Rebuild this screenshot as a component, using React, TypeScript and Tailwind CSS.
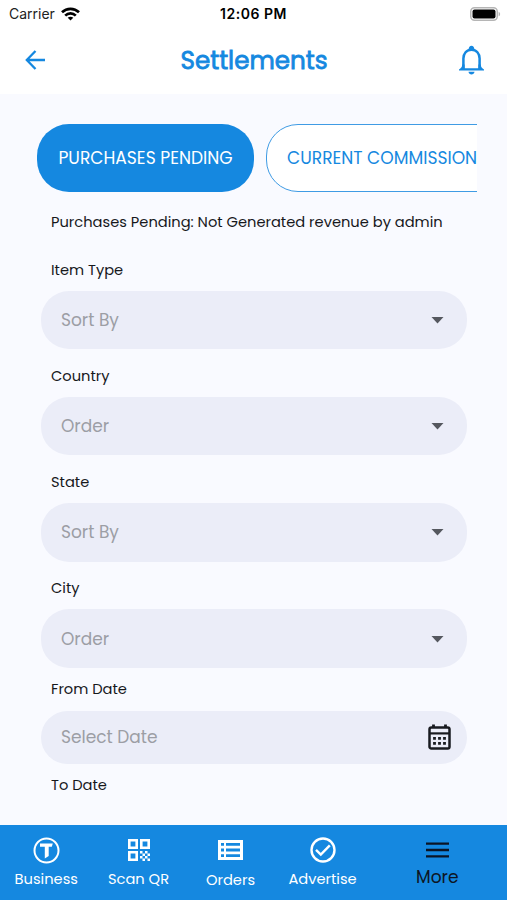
import type { ReactNode } from "react";

const selects = [
  { label: "Item Type", value: "Sort By" },
  { label: "Country", value: "Order" },
  { label: "State", value: "Sort By" },
  { label: "City", value: "Order" },
];

function StatusBar() {
  return (
    <div className="h-7 grid grid-cols-3 items-center pl-[9px] pr-[6px] text-black font-['Inter',sans-serif]">
      <div className="flex items-center gap-[6px]">
        <span className="text-[14px] leading-5 text-[#222]">Carrier</span>
        <svg width="19" height="14" viewBox="0 0 19 14" fill="none" stroke="currentColor" strokeWidth="2.7">
          <path d="M1 5.3C5.8.7 13.2.7 18 5.3" />
          <path d="M4.2 8.6c3-2.9 7.6-2.9 10.6 0" />
          <path d="M9.5 13.6 6.7 10.8c1.6-1.5 4-1.5 5.6 0z" fill="currentColor" stroke="none" />
        </svg>
      </div>
      <span className="-ml-[3px] text-center whitespace-nowrap text-[14px] leading-5 font-semibold tracking-[0.5px]">
        12:06 PM
      </span>
      <div className="flex justify-end">
        <svg width="31" height="14" viewBox="0 0 31 14">
          <rect x="0.75" y="0.75" width="26.5" height="12.5" rx="3.8" fill="#fff" stroke="#b5b5b5" strokeWidth="1.5" />
          <rect x="2.5" y="2.5" width="23" height="9" rx="2" fill="#000" />
          <path d="M28.6 4.7c2 .8 2 3.8 0 4.6z" fill="#b5b5b5" />
        </svg>
      </div>
    </div>
  );
}

function Header() {
  return (
    <div className="h-[66px] flex items-center justify-between pl-[25px] pr-[22px] pb-[3px] text-[#1588e0]">
      <svg width="21" height="20" viewBox="0 0 21 20" fill="none" stroke="currentColor" strokeWidth="2.3">
        <path d="M20 10H2M10.5 1 1.8 10l8.7 9" />
      </svg>
      <h1 className="ml-[3px] mt-[2px] text-[24.6px] leading-8 font-normal [-webkit-text-stroke:0.8px_#1588e0]">
        Settlements
      </h1>
      <svg width="26" height="30" viewBox="0 0 26 30" fill="none" stroke="currentColor" strokeWidth="2.5">
        <path d="M4.4 24.5V13.5C4.4 8.5 7.5 4.7 12.5 4.7s8.1 3.8 8.1 8.8v11" />
        <path d="M3.2 19.5c0 2.6-1.3 3.9-3.2 4.9v1.2h25v-1.2c-1.9-1-3.2-2.3-3.2-4.9h-2.4v3.8H5.600v-3.800z" fill="currentColor" stroke="none" />
        <path d="M9.5 5C9.5-.8 15.500-.8 15.500 5zM9.500 26.800h6c-.3 3.700-5.700 3.700-6 0z" fill="currentColor" stroke="none" />
      </svg>
    </div>
  );
}

function CalendarIcon() {
  return (
    <svg width="24" height="26" viewBox="0 0 24 26" fill="none" stroke="#191b20">
      <rect x="1.5" y="3.5" width="20" height="21" rx="1.8" strokeWidth="2.5" />
      <path d="M1 9.4h21" strokeWidth="2.2" />
      <path d="M5.5 .5V4M17.5 .5V4" strokeWidth="2.8" />
      <path d="M5.1 14.4h12.8M5.1 19.3h12.8" strokeWidth="2.8" strokeDasharray="2.8 2.2" />
    </svg>
  );
}

function NavItem({ label, children, className }: { label: string; children: ReactNode; className: string }) {
  return (
    <div className="flex flex-col items-center pt-[11px]">
      <div className="h-7 flex items-center">{children}</div>
      <span className={className}>{label}</span>
    </div>
  );
}

function BottomNav() {
  return (
    <nav className="h-[75px] shrink-0 grid grid-cols-[92.5px_92px_92px_92px_1fr] bg-[#1588e0] pr-[1px] text-white">
      <NavItem label="Business" className="mt-[5px] text-[14.67px] leading-5">
        <svg width="27" height="27" viewBox="0 0 27 27" fill="none" stroke="currentColor">
          <circle cx="13.5" cy="13.5" r="12" strokeWidth="2" />
          <path d="M7 6.400h12.800l-1 3.300h-3.100V19l-3.900 2.400V9.700H7z" fill="currentColor" stroke="none" />
        </svg>
      </NavItem>
      <NavItem label="Scan QR" className="mt-[5px] text-[14.67px] leading-5">
        <svg width="24" height="24" viewBox="0 0 24 24" fill="currentColor">
          <path fillRule="evenodd" d="M1 1h10v10H1zM3.6 3.6v4.8h4.8V3.6zM13 1h10v10H13zM15.6 3.6v4.8h4.8V3.6zM1 13h10v10H1zM3.6 15.6v4.8h4.8v-4.8z" />
          <path d="M13 13h2.5v2.5H13zM18 13h2.5v2.5H18zM15.5 15.5H18V18h-2.5zM20.5 15.5H23V18h-2.5zM13 18h2.5v2.5H13zM18 18h2.5v2.5H18zM15.5 20.5H18V23h-2.5zM20.5 20.5H23V23h-2.5z" />
        </svg>
      </NavItem>
      <NavItem label="Orders" className="mt-[6px] text-[14.67px] leading-5">
        <svg width="25" height="20" viewBox="0 0 25 20">
          <path d="M0 0h25v20H0z" fill="currentColor" />
          <path d="M3 3h3v2.8H3zM8 3h14v2.8H8zM3 8.6h3v2.8H3zM8 8.6h14v2.8H8zM3 14.2h3V17H3zM8 14.2h14V17H8z" fill="#1588e0" />
        </svg>
      </NavItem>
      <NavItem label="Advertise" className="mt-[5px] text-[14.67px] leading-5">
        <svg width="26" height="26" viewBox="0 0 26 26" fill="none" stroke="currentColor" strokeWidth="2.4">
          <circle cx="13" cy="13" r="11.5" />
          <path d="m6 12.8 4.8 4.8 9-9.3" />
        </svg>
      </NavItem>
      <NavItem label="More" className="mt-[3px] text-[17px] leading-5 text-[#0d1523]">
        <svg width="23" height="16" viewBox="0 0 23 16" stroke="#0b1424" strokeWidth="2.4">
          <path d="M0 1.6h23M0 8h23M0 14.4h23" />
        </svg>
      </NavItem>
    </nav>
  );
}

export default function App() {
  return (
    <div className="h-[900px] w-full flex flex-col overflow-hidden bg-[#f9faff] font-['Poppins','Inter',sans-serif]">
      <header className="shrink-0 bg-white">
        <StatusBar />
        <Header />
      </header>

      <main className="flex-1 min-h-0 overflow-hidden pt-[30px]">
        <div className="ml-[37px] mr-[30px] flex gap-3 overflow-hidden whitespace-nowrap text-[17.1px] leading-6">
          <button className="h-[68px] w-[217px] shrink-0 rounded-[32px] bg-[#1588e0] text-white">
            PURCHASES PENDING
          </button>
          <button className="h-[68px] w-[250px] shrink-0 rounded-[32px] border border-[#3f9be4] bg-white pl-5 text-left text-[#1588e0]">
            CURRENT COMMISSION
          </button>
        </div>

        <p className="mt-5 ml-[51px] text-[14.67px] leading-5 whitespace-nowrap text-[#17181c]">
          Purchases Pending: Not Generated revenue by admin
        </p>

        <div className="mt-[27.5px] ml-[41px] w-[426px]">
          {selects.map((s) => (
            <div key={s.label} className="h-[106.3px]">
              <div className="ml-[10px] text-[14.67px] leading-5 text-[#17181c]">{s.label}</div>
              <div className="mt-[11px] h-[58.5px] flex items-center justify-between rounded-[28px] bg-[#ebedf8] pl-5 pr-[23px]">
                <span className="text-[17px] leading-6 text-[#9c9ea5]">{s.value}</span>
                <svg width="13" height="7" viewBox="0 0 13 7" className="mt-px text-[#55585f]">
                  <path d="M0.5 0h12L6.5 6.5z" fill="currentColor" />
                </svg>
              </div>
            </div>
          ))}

          <div className="-mt-[6px] ml-[10px] text-[14.67px] leading-5 text-[#17181c]">From Date</div>
          <div className="mt-[12px] h-[53.5px] flex items-center justify-between rounded-[27px] bg-[#ebedf8] pl-5 pr-[15px]">
            <span className="text-[17px] leading-6 text-[#9c9ea5]">Select Date</span>
            <CalendarIcon />
          </div>
          <div className="mt-[10.5px] ml-[10px] text-[14.67px] leading-5 text-[#17181c]">To Date</div>
        </div>
      </main>

      <BottomNav />
    </div>
  );
}
